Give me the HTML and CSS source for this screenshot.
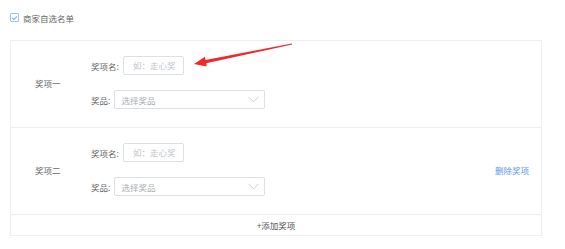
FILE: index.html
```html
<!DOCTYPE html>
<html>
<head>
    <title>奖项设置</title>
    <link rel="stylesheet" href="styles.css">
</head>
<body>
    <label class="check">
        <span class="check-box"></span>
        <span>商家自选名单</span>
    </label>

    <div class="prize-box">
        <div class="prize-row">
            <div class="prize-title">奖项一</div>
            <div class="fields">
                <div class="field">
                    <span class="field-label">奖项名:</span>
                    <div class="input">如：走心奖</div>
                </div>
                <div class="field">
                    <span class="field-label">奖品:</span>
                    <div class="select">
                        <span>选择奖品</span>
                        <svg width="11" height="7" viewBox="0 0 11 7"><path d="M0.5 0.8 L5.5 5.8 L10.5 0.8" fill="none" stroke="#c9ccd3" stroke-width="1"/></svg>
                    </div>
                </div>
            </div>
        </div>
        <div class="prize-row">
            <div class="prize-title">奖项二</div>
            <div class="fields">
                <div class="field">
                    <span class="field-label">奖项名:</span>
                    <div class="input">如：走心奖</div>
                </div>
                <div class="field">
                    <span class="field-label">奖品:</span>
                    <div class="select">
                        <span>选择奖品</span>
                        <svg width="11" height="7" viewBox="0 0 11 7"><path d="M0.5 0.8 L5.5 5.8 L10.5 0.8" fill="none" stroke="#c9ccd3" stroke-width="1"/></svg>
                    </div>
                </div>
            </div>
            <a class="remove">删除奖项</a>
        </div>
        <div class="add">+添加奖项</div>
    </div>

    <!-- annotation arrow -->
    <svg class="arrow" width="565" height="249" viewBox="0 0 565 249">
        <polygon points="194,64 204.9,56.8 205.5,60.1 291.9,43.4 292.1,44.6 206.1,63.3 206.7,66.4" fill="#f3262a"/>
    </svg>
</body>
</html>
```

FILE: styles.css
```css
body {
    margin: 0;
    padding: 12px 24px 0 10px;
    font-family: "Noto Sans CJK SC", "Noto Sans", sans-serif;
    font-size: 8.5px;
    color: #606266;
    background: #fff;
}
.check {
    display: flex;
    align-items: center;
    gap: 4px;
    height: 11px;
    color: #666;
}
.check-box {
    position: relative;
    width: 7px;
    height: 7px;
    border: 1px solid #9fc3f3;
    border-radius: 1px;
}
.check-box::after {
    content: "";
    position: absolute;
    left: 2px;
    top: 0.5px;
    width: 2px;
    height: 4px;
    border: solid #7aa9ee;
    border-width: 0 1px 1px 0;
    transform: rotate(45deg);
}
.prize-box {
    margin-top: 17px;
    width: 530px;
    border: 1px solid #ebeef2;
}
.prize-row {
    display: flex;
    align-items: center;
    padding: 15px 12px 18px 24px;
    border-bottom: 1px solid #ebeef2;
}
.prize-title {
    width: 56px;
    color: #666;
}
.fields {
    display: flex;
    flex-direction: column;
    gap: 15px;
}
.field {
    display: flex;
    align-items: center;
    gap: 4px;
}
.field-label {
    color: #666;
}
.input {
    box-sizing: border-box;
    width: 61px;
    height: 19px;
    line-height: 17px;
    padding-left: 9px;
    border: 1px solid #dcdfe6;
    border-radius: 2px;
    color: #c0c4cc;
}
.select {
    box-sizing: border-box;
    display: flex;
    align-items: center;
    justify-content: space-between;
    width: 151px;
    height: 19px;
    padding: 0 5px 0 6px;
    border: 1px solid #dcdfe6;
    border-radius: 2px;
    color: #a8abb2;
}
.remove {
    margin-left: auto;
    color: #5b9bf0;
    cursor: pointer;
}
.add {
    height: 20px;
    line-height: 20px;
    text-align: center;
    color: #555;
}
.arrow {
    position: absolute;
    left: 0;
    top: 0;
    pointer-events: none;
}
```
